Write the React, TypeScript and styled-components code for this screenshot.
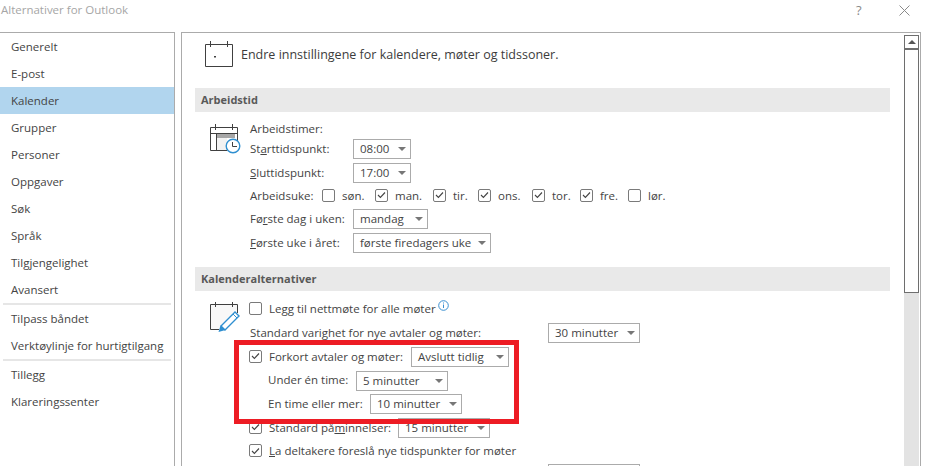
import { createGlobalStyle, styled } from "styled-components";

const GlobalStyle = createGlobalStyle`
  html, body {
    margin: 0;
    padding: 0;
    background: #fff;
    overflow: hidden;
  }
  body {
    font-family: "Open Sans", "Liberation Sans", sans-serif;
    font-size: 11.5px;
    color: #444;
  }
`;

const Window = styled.div`
  width: 925px;
  height: 466px;
  display: flex;
  flex-direction: column;
  overflow: hidden;
`;

const TitleBar = styled.div`
  height: 32px;
  display: flex;
  align-items: flex-start;
  padding: 2px 0 0 1px;
  box-sizing: border-box;
  color: #a6a6a6;
  font-size: 11.5px;
  line-height: 16px;
`;

const TitleText = styled.div`
  flex: 1;
`;

const HelpMark = styled.div`
  width: 43px;
  color: #8a8a8a;
  font-size: 13px;
  line-height: 14px;
  margin-top: 1px;
`;

const CloseBox = styled.div`
  width: 26px;
  height: 14px;
  margin-top: 2px;
`;

const Body = styled.div`
  flex: 1;
  display: flex;
  min-height: 0;
`;

const Sidebar = styled.nav`
  width: 174px;
  margin-right: 6px;
  border-top: 1px solid #ababab;
  border-right: 1px solid #ababab;
  flex-shrink: 0;
`;

const NavItem = styled.div<{ $active?: boolean }>`
  height: 27px;
  line-height: 27px;
  padding-left: 11px;
  background: ${(p) => (p.$active ? "#b1d5ee" : "transparent")};
  color: #444;
  white-space: nowrap;
`;

const NavDivider = styled.div`
  height: 2px;
  margin: 0 3px;
  background: #e6e6e6;
`;

const Pane = styled.main`
  flex: 1;
  min-width: 0;
  border-top: 1px solid #ababab;
  border-left: 1px solid #ababab;
  border-right: 1px solid #ababab;
  margin-right: 4px;
  display: flex;
`;

const Content = styled.div`
  flex: 1;
  min-width: 0;
  padding: 0 14px 0 13px;
`;

const Intro = styled.div`
  height: 55px;
  display: flex;
  align-items: flex-start;
  padding: 8px 0 0 10px;
  box-sizing: border-box;
  gap: 8px;
  font-size: 12.5px;
  color: #3c3c3c;
`;

const IntroText = styled.div`
  padding-top: 5px;
  line-height: 18px;
`;

const SectionHeader = styled.div`
  height: 24px;
  line-height: 23px;
  background: #e9e9e9;
  padding-left: 6px;
  font-weight: 700;
  font-size: 11px;
  color: #595959;
`;

const Section = styled.section<{ $top: number; $bottom: number }>`
  display: flex;
  padding: ${(p) => p.$top}px 0 ${(p) => p.$bottom}px 14px;
`;

const IconSlot = styled.div<{ $top: number }>`
  width: 41px;
  flex-shrink: 0;
  padding-top: ${(p) => p.$top}px;
`;

const Rows = styled.div`
  flex: 1;
  display: flex;
  flex-direction: column;
`;

const Row = styled.div<{ $indent?: number; $height?: number }>`
  height: ${(p) => p.$height ?? 24}px;
  display: flex;
  align-items: center;
  margin-left: ${(p) => p.$indent ?? 0}px;
  white-space: nowrap;
`;

const Label = styled.span<{ $width?: number }>`
  ${(p) => (p.$width ? `width: ${p.$width}px;` : "")}
  flex-shrink: 0;
  color: #444;
  margin-bottom: 2px;
`;

const Key = styled.span`
  text-decoration: underline;
`;

const DayItem = styled.span<{ $width: number }>`
  width: ${(p) => p.$width}px;
  display: flex;
  align-items: center;
  flex-shrink: 0;
`;

const Select = styled.div<{ $width: number }>`
  width: ${(p) => p.$width}px;
  height: 20px;
  box-sizing: border-box;
  border: 1px solid #ababab;
  background: #fff;
  display: flex;
  align-items: center;
  padding: 0 4px 0 6px;
  flex-shrink: 0;
`;

const SelectText = styled.span`
  flex: 1;
  margin-bottom: 1px;
`;

const Caret = styled.span`
  width: 0;
  height: 0;
  border-left: 4px solid transparent;
  border-right: 4px solid transparent;
  border-top: 4px solid #777;
`;

const Box = styled.span`
  width: 13px;
  height: 13px;
  box-sizing: border-box;
  border: 1px solid #7a7a7a;
  border-radius: 2px;
  background: #fff;
  display: inline-flex;
  align-items: center;
  justify-content: center;
  margin: 0 7px 2px 0;
  flex-shrink: 0;
`;

const Info = styled.span`
  margin: -7px 0 0 2px;
  display: inline-flex;
`;

const ScrollBar = styled.div`
  width: 15px;
  margin: 2px 1px 0 0;
  display: flex;
  flex-direction: column;
  flex-shrink: 0;
`;

const ScrollArrow = styled.div`
  height: 15px;
  box-sizing: border-box;
  display: flex;
  align-items: center;
  justify-content: center;
  border: 1px solid #6e6e6e;
  border-bottom-width: 2px;
`;

const ArrowUp = styled.span`
  width: 0;
  height: 0;
  border-left: 4px solid transparent;
  border-right: 4px solid transparent;
  border-bottom: 4px solid #555;
`;

const ScrollThumb = styled.div`
  height: 243px;
  box-sizing: border-box;
  background: #fff;
  border: 1px solid #6e6e6e;
  border-top: none;
`;

const ScrollTrack = styled.div`
  flex: 1;
  background: #e3e3e3;
`;

const Highlight = styled.div`
  position: absolute;
  left: 234px;
  top: 340px;
  width: 285px;
  height: 84px;
  box-sizing: border-box;
  border: 5px solid #ed1c24;
  pointer-events: none;
`;

const Check = ({ on }: { on?: boolean }) => (
  <Box>
    {on && (
      <svg width="9" height="8" viewBox="0 0 9 8">
        <path d="M1 4l2.4 2.4L8 1.5" fill="none" stroke="#444" strokeWidth="1.1" />
      </svg>
    )}
  </Box>
);

const Dropdown = ({ width, children }: { width: number; children?: string }) => (
  <Select $width={width}>
    <SelectText>{children}</SelectText>
    <Caret />
  </Select>
);

const CalendarIcon = () => (
  <svg width="28" height="27" viewBox="0 0 28 27" fill="none" stroke="#404040">
    <path d="M.5 3.500h27v22H.5zM5.500 0v6M22.500 0v6" />
    <path d="M9 15h2v1.500H9z" fill="#404040" stroke="none" />
  </svg>
);

const WorkHoursIcon = () => (
  <svg width="36" height="31" viewBox="0 0 36 31" fill="none" style={{ display: "block" }}>
    <path d="M1.500 26.500v-23h27v14M1.500 26.500h17M6.500 0v6M23.500 0v6M7.500 9.500v17M1.500 9.500h27" stroke="#404040" />
    <path d="M8 10h18v4H8z" fill="#a6a6a6" />
    <path d="M8 14h10v12H8z" fill="#f2f2f2" />
    <circle cx="24" cy="22" r="6.800" fill="#fff" stroke="#2f8fd0" strokeWidth="1.400" />
    <path d="M23.500 18v4.500H28" stroke="#404040" />
  </svg>
);

const EditCalendarIcon = () => (
  <svg width="32" height="31" viewBox="0 0 32 31" fill="none" style={{ display: "block" }}>
    <path d="M1.500 2.500h27v9l-18 16h-9z" fill="#f8f8f8" />
    <path d="M28.500 11V2.500h-27v25H10M6.500 0v5M23.500 0v5" stroke="#404040" />
    <path d="M12 24L26 10l4 4-14 14z" fill="#fff" stroke="#2f8fd0" strokeWidth="1.400" />
    <path d="M9.500 30l2-6.500 5 4.500z" fill="#2f8fd0" />
    <path d="M24 12l4 4" stroke="#2f8fd0" />
  </svg>
);

const InfoIcon = () => (
  <svg width="11" height="11" viewBox="0 0 11 11" fill="none">
    <circle cx="5.500" cy="5.500" r="4.800" stroke="#3a8fd0" />
    <path d="M5.500 4.500v3.500M5.500 2.500v1" stroke="#3a8fd0" />
  </svg>
);

const navTop = ["Generelt", "E-post", "Kalender", "Grupper", "Personer", "Oppgaver", "Søk", "Språk", "Tilgjengelighet", "Avansert"];
const days = [
  { name: "søn.", on: false, width: 53 },
  { name: "man.", on: true, width: 58 },
  { name: "tir.", on: true, width: 45 },
  { name: "ons.", on: true, width: 54 },
  { name: "tor.", on: true, width: 48 },
  { name: "fre.", on: true, width: 48 },
  { name: "lør.", on: false, width: 48 },
];

export default function App() {
  return (
    <Window>
      <GlobalStyle />
      <TitleBar>
        <TitleText>Alternativer for Outlook</TitleText>
        <HelpMark>?</HelpMark>
        <CloseBox>
          <svg width="11" height="11" viewBox="0 0 11 11">
            <path d="M.5.5l10 10M10.500.5l-10 10" stroke="#8a8a8a" fill="none" />
          </svg>
        </CloseBox>
      </TitleBar>
      <Body>
        <Sidebar>
          {navTop.map((name) => (
            <NavItem key={name} $active={name === "Kalender"}>{name}</NavItem>
          ))}
          <NavDivider />
          <NavItem>Tilpass båndet</NavItem>
          <NavItem>Verktøylinje for hurtigtilgang</NavItem>
          <NavDivider />
          <NavItem>Tillegg</NavItem>
          <NavItem>Klareringssenter</NavItem>
        </Sidebar>
        <Pane>
          <Content>
            <Intro>
              <CalendarIcon />
              <IntroText>Endre innstillingene for kalendere, møter og tidssoner.</IntroText>
            </Intro>
            <SectionHeader>Arbeidstid</SectionHeader>
            <Section $top={9} $bottom={12}>
              <IconSlot $top={3}><WorkHoursIcon /></IconSlot>
              <Rows>
                <Row $height={16}><Label>Arbeidstimer:</Label></Row>
                <Row>
                  <Label $width={103}>St<Key>a</Key>rttidspunkt:</Label>
                  <Dropdown width={58}>08:00</Dropdown>
                </Row>
                <Row>
                  <Label $width={103}><Key>S</Key>luttidspunkt:</Label>
                  <Dropdown width={58}>17:00</Dropdown>
                </Row>
                <Row $height={22}>
                  <Label $width={72}>Arbeidsuke:</Label>
                  {days.map((d) => (
                    <DayItem key={d.name} $width={d.width}>
                      <Check on={d.on} />
                      <Label>{d.name}</Label>
                    </DayItem>
                  ))}
                </Row>
                <Row>
                  <Label $width={103}>Fø<Key>r</Key>ste dag i uken:</Label>
                  <Dropdown width={75}>mandag</Dropdown>
                </Row>
                <Row>
                  <Label $width={103}><Key>F</Key>ørste uke i året:</Label>
                  <Dropdown width={138}>første firedagers uke</Dropdown>
                </Row>
              </Rows>
            </Section>
            <SectionHeader>Kalenderalternativer</SectionHeader>
            <Section $top={6} $bottom={0}>
              <IconSlot $top={5}><EditCalendarIcon /></IconSlot>
              <Rows>
                <Row $indent={-1}>
                  <Check />
                  <Label>Legg til nettmøte for alle møter</Label>
                  <Info><InfoIcon /></Info>
                </Row>
                <Row>
                  <Label $width={298}>Standard varighet for nye avtaler og møter:</Label>
                  <Dropdown width={92}>30 minutter</Dropdown>
                </Row>
                <Row $indent={-1}>
                  <Check on />
                  <Label $width={142}>Forkort avtaler og møter:</Label>
                  <Dropdown width={98}>Avslutt tidlig</Dropdown>
                </Row>
                <Row $indent={18} $height={23}>
                  <Label $width={88}>Under én time:</Label>
                  <Dropdown width={92}>5 minutter</Dropdown>
                </Row>
                <Row $indent={18}>
                  <Label $width={102}>En time eller mer:</Label>
                  <Dropdown width={92}>10 minutter</Dropdown>
                </Row>
                <Row $indent={-1}>
                  <Check on />
                  <Label $width={129}>Standard på<Key>m</Key>innelser:</Label>
                  <Dropdown width={92}>15 minutter</Dropdown>
                </Row>
                <Row $indent={-1} $height={23}>
                  <Check on />
                  <Label><Key>L</Key>a deltakere foreslå nye tidspunkter for møter</Label>
                </Row>
                <Row $height={22}>
                  <Label $width={298} />
                  <Dropdown width={92} />
                </Row>
              </Rows>
            </Section>
          </Content>
          <ScrollBar>
            <ScrollArrow><ArrowUp /></ScrollArrow>
            <ScrollThumb />
            <ScrollTrack />
          </ScrollBar>
        </Pane>
      </Body>
      <Highlight />
    </Window>
  );
}
